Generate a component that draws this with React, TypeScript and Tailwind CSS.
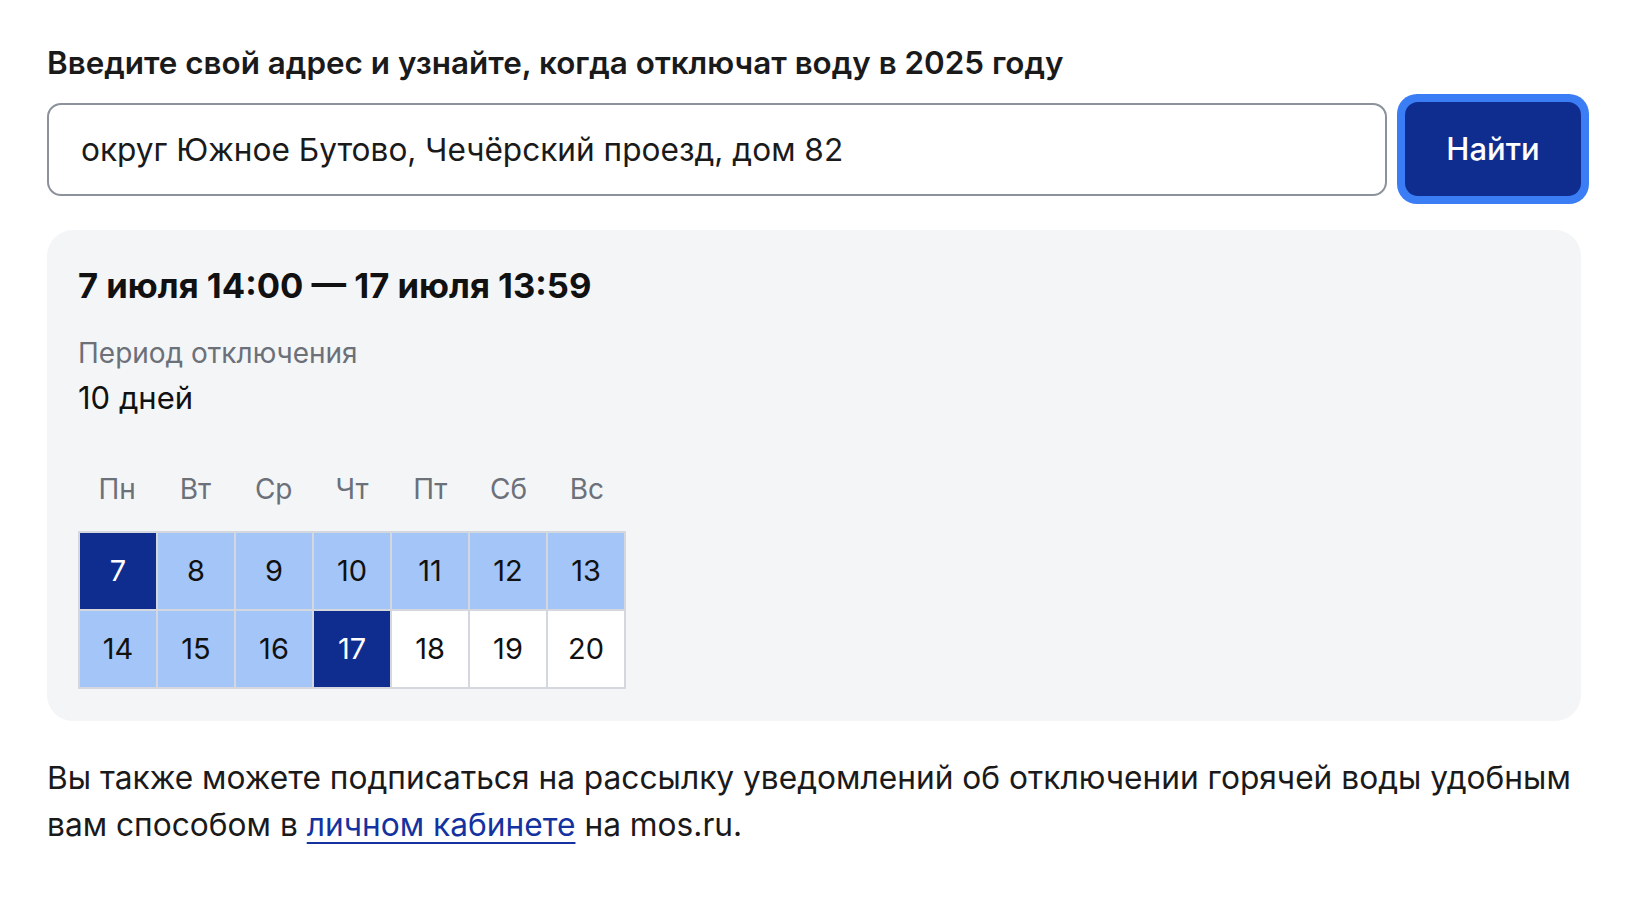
import React from "react";

const WEEKDAYS = ["Пн", "Вт", "Ср", "Чт", "Пт", "Сб", "Вс"];

// 7 и 17 — края периода, между ними — дни отключения
const DAYS: { n: number; kind: "edge" | "off" | "free" }[] = [
  { n: 7, kind: "edge" },
  { n: 8, kind: "off" },
  { n: 9, kind: "off" },
  { n: 10, kind: "off" },
  { n: 11, kind: "off" },
  { n: 12, kind: "off" },
  { n: 13, kind: "off" },
  { n: 14, kind: "off" },
  { n: 15, kind: "off" },
  { n: 16, kind: "off" },
  { n: 17, kind: "edge" },
  { n: 18, kind: "free" },
  { n: 19, kind: "free" },
  { n: 20, kind: "free" },
];

function DayCell({ n, kind }: { n: number; kind: "edge" | "off" | "free" }) {
  const cls =
    kind === "edge"
      ? "bg-[#0f2d8f] text-white"
      : kind === "off"
        ? "bg-[#a3c5f8] text-[#111]"
        : "bg-white text-[#111]";
  return (
    <div className={`h-[76px] flex items-center justify-center text-[29px] ${cls}`}>
      {n}
    </div>
  );
}

export default function App() {
  return (
    <div
      className="min-h-screen bg-white text-[#1a1a1a] pl-[47px] pr-[49px] pt-[43px]"
      style={{ fontFamily: "Inter, 'Noto Sans', sans-serif" }}
    >
      <h1 className="text-[31.4px] font-semibold leading-[40px] text-[#1a1a1a]">
        Введите свой адрес и узнайте, когда отключат воду в 2025 году
      </h1>

      <div className="mt-[11px] flex items-center gap-[10px]">
        <input
          type="text"
          defaultValue="округ Южное Бутово, Чечёрский проезд, дом 82"
          className="flex-1 h-[93px] rounded-[14px] border-2 border-[#8b929b] bg-white px-[32px] text-[31.6px] text-[#1a1a1a] outline-none"
        />
        <div className="rounded-[20px] bg-[#3b7df5] p-[8px]">
          <button className="h-[94px] w-[176px] rounded-[13px] bg-[#0f2d8f] text-white text-[31px] font-medium">
            Найти
          </button>
        </div>
      </div>

      <div className="mt-[26px] mr-[8px] rounded-[26px] bg-[#f4f5f7] px-[31px] pt-[33px] pb-[32px]">
        <div className="text-[34.6px] font-bold leading-[44px] text-[#111]">
          7 июля 14:00 — 17 июля 13:59
        </div>
        <div className="mt-[27px] text-[28px] leading-[38px] text-[#6b7079]">
          Период отключения
        </div>
        <div className="mt-[6px] text-[31px] leading-[40px] text-[#111]">10 дней</div>

        <div className="mt-[52px] w-[548px]">
          <div className="grid grid-cols-7">
            {WEEKDAYS.map((d) => (
              <div key={d} className="text-center text-[28px] leading-[38px] text-[#6b7079]">
                {d}
              </div>
            ))}
          </div>
          <div className="mt-[23px] grid grid-cols-7 gap-[2px] bg-[#d4d8de] border-2 border-[#d4d8de]">
            {DAYS.map((d) => (
              <DayCell key={d.n} n={d.n} kind={d.kind} />
            ))}
          </div>
        </div>
      </div>

      <p className="mt-[33px] text-[31.7px] leading-[47px] text-[#1a1a1a]">
        Вы также можете подписаться на рассылку уведомлений об отключении горячей воды удобным
        <br />
        вам способом в{" "}
        <a href="#" className="text-[#1432a0] underline underline-offset-[6px] decoration-2">
          личном кабинете
        </a>{" "}
        на mos.ru.
      </p>
    </div>
  );
}
